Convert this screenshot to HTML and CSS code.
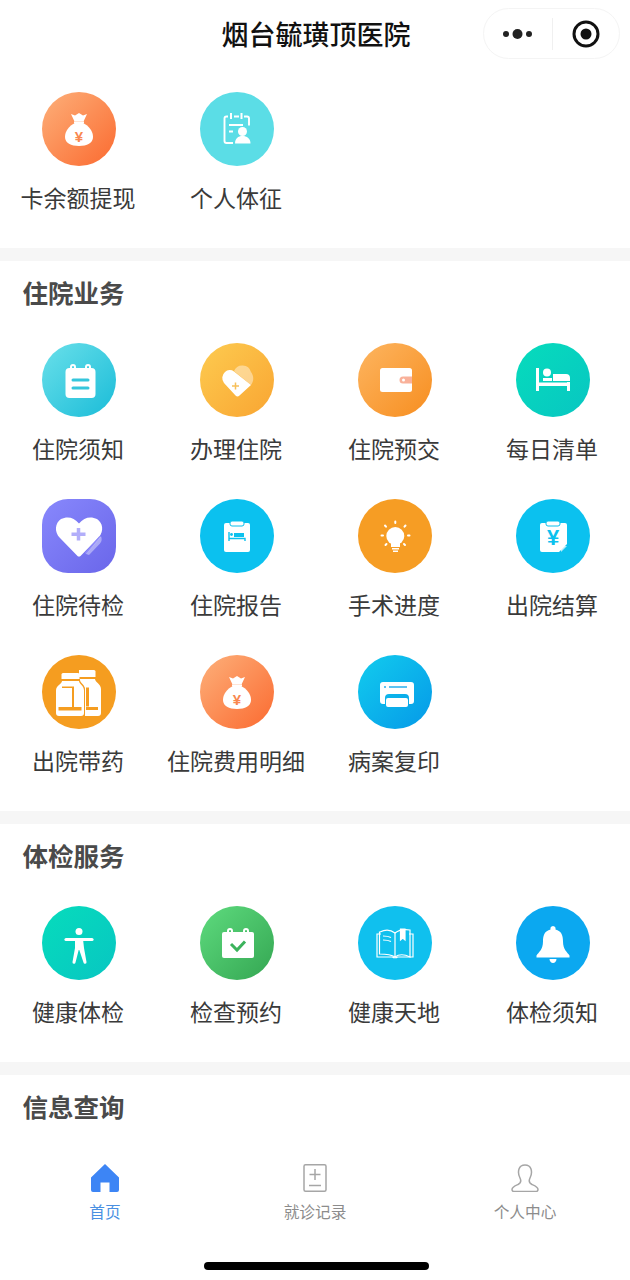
FILE: index.html
```html
<!DOCTYPE html>
<html lang="zh-CN">
<head>
<meta charset="utf-8">
<title>烟台毓璜顶医院</title>
<link rel="stylesheet" href="styles.css">
</head>
<body>
<div class="app">
  <header class="topbar">
    <h1 class="topbar-title">烟台毓璜顶医院</h1>
    <div class="capsule">
      <svg class="capsule-more" viewBox="0 0 32 12"><circle cx="4" cy="6" r="3"/><circle cx="15.500" cy="6" r="5"/><circle cx="27" cy="6" r="3"/></svg>
      <span class="capsule-line"></span>
      <svg class="capsule-close" viewBox="0 0 28 28"><circle cx="14" cy="14" r="12" fill="none" stroke="#111" stroke-width="3"/><circle cx="14" cy="14" r="5.500" fill="#111"/></svg>
    </div>
  </header>

  <main class="content">
    <section class="block">
      <div class="grid">
        <a class="item"><span class="badge g-orange"><svg viewBox="0 0 74 74"><path fill="#fff" d="M29 22l4 1.500 4-2.500 4 2.500 4-1.500-3.500 7.500h-9z"/><rect x="32" y="29.500" width="10" height="2" fill="#fff"/><path fill="#fff" d="M33 31h8c6 3 10 8 10 14 0 6-6 9-14 9s-14-3-14-9c0-6 4-11 10-14z"/><text x="37" y="49.500" class="yen" fill="#f9874f" font-size="15">¥</text></svg></span><span class="label">卡余额提现</span></a>
        <a class="item"><span class="badge c-aqua"><svg viewBox="0 0 74 74"><path fill="none" stroke="#fff" stroke-width="1.900" d="M28 24.500h-1.500a2 2 0 0 0-2 2v22.500a2 2 0 0 0 2 2h6.500M34 24.500h5M44 24.500h3a2 2 0 0 1 2 2v7"/><path stroke="#fff" stroke-width="2" d="M31 21v6M41.500 21v6M29 33h14M29 39.500h4"/><circle cx="42.500" cy="39.500" r="4.500" fill="#fff"/><path fill="#fff" d="M35 51.500c0-5 3-7.500 7.500-7.500s8 2.500 8 7.500z"/></svg></span><span class="label">个人体征</span></a>
      </div>
    </section>

    <section class="block">
      <h2 class="block-title">住院业务</h2>
      <div class="grid">
        <a class="item"><span class="badge g-teal"><svg viewBox="0 0 74 74"><rect x="23.500" y="25" width="30" height="30" rx="4" fill="#fff"/><path fill="none" stroke="#fff" stroke-width="2" d="M29 27v-3a2 2 0 0 1 4 0v3M44 27v-3a2 2 0 0 1 4 0v3"/><path stroke="#35c6dc" stroke-width="3" stroke-linecap="round" d="M31 37h15M31 45h15"/></svg></span><span class="label">住院须知</span></a>
        <a class="item"><span class="badge g-yellow"><svg viewBox="0 0 74 74"><path fill="#fff" fill-opacity=".42" d="M34 28a9 9 0 0 1 17 1c3 4 3 9 0 13z"/><path fill="#fff" d="M25 29a7 7 0 0 1 9-.5L51 42 39.500 52.500a3 3 0 0 1-4 0L24 40a8 8 0 0 1 1-11z"/><path stroke="#f7c05a" stroke-width="1.500" d="M35.500 39.500v7M32 43h7"/></svg></span><span class="label">办理住院</span></a>
        <a class="item"><span class="badge g-amber"><svg viewBox="0 0 74 74"><rect x="22" y="25" width="32" height="24" rx="2.500" fill="#fff"/><path fill="#f9b19a" d="M45 33.500h9v7h-9a3.500 3.500 0 0 1 0-7z"/><circle cx="45.500" cy="37" r="1.500" fill="#fff"/></svg></span><span class="label">住院预交</span></a>
        <a class="item"><span class="badge g-green"><svg viewBox="0 0 74 74"><path fill="#fff" d="M20 25h3v23h-3zM51 39h3v9h-3zM23 39.500h31V43H23z"/><circle cx="31" cy="29.500" r="4" fill="#fff"/><path fill="#fff" d="M37 31h13a4 4 0 0 1 4 4v3H37zM27 35h9v3h-9z"/></svg></span><span class="label">每日清单</span></a>
        <a class="item"><span class="badge s-purple"><svg viewBox="0 0 74 74"><path fill="#fff" d="M37 57.500a2 2 0 0 1-1.500-.5L18 39c-6-6-5-15 1-19 6-3 13-2 18 4.500 5-6.500 12-7.500 18-4.500 6 4 7 12 2 18L38.500 57a2 2 0 0 1-1.500.5z"/><path fill="#8e8afa" d="M57 37.500L59 38 44.500 55l-2-1z"/><path fill="#fff" fill-opacity=".4" d="M59 37c1 3 1 5-1 7.500L47 56l-3-1z"/><path stroke="#b2aefa" stroke-width="3.500" d="M36.500 29v12.500M29.500 35.300h14"/></svg></span><span class="label">住院待检</span></a>
        <a class="item"><span class="badge c-sky"><svg viewBox="0 0 74 74"><rect x="24" y="24" width="26" height="29" rx="2" fill="#fff"/><rect x="30" y="22" width="14" height="5" rx="2" fill="#fff" stroke="#0bc1ee"/><path fill="none" stroke="#0bc1ee" stroke-width="1.400" d="M29 33v9M29 39.500h16v2.500"/><path fill="#0bc1ee" d="M34 34h10v4H34z"/><circle cx="31.500" cy="35.500" r="1.400" fill="#0bc1ee"/></svg></span><span class="label">住院报告</span></a>
        <a class="item"><span class="badge c-orange"><svg viewBox="0 0 74 74"><circle cx="37.300" cy="37" r="9" fill="#fff"/><path fill="#fff" d="M33 44h9v4h-9zM34 49h7v1.500h-7zM35 51.500h5v1.500h-5z"/><path stroke="#fff" stroke-width="2" stroke-linecap="round" d="M37.300 22.500v1.500M27 26.500l1 1.200M47.500 26.500l-1 1.200M23.500 36.500h1.500M50 36.500h1.500M27.500 46l1-1M47 46l-1-1"/></svg></span><span class="label">手术进度</span></a>
        <a class="item"><span class="badge c-sky"><svg viewBox="0 0 74 74"><path fill="#fff" d="M26 24h23a2 2 0 0 1 2 2v19l-8 8H26a2 2 0 0 1-2-2V26a2 2 0 0 1 2-2z"/><path fill="#fff" fill-opacity=".7" d="M45 53v-6h6z"/><rect x="30" y="22" width="14" height="5" rx="2" fill="#fff" stroke="#0bc1ee"/><text x="37" y="46" class="yen" fill="#0bc1ee" font-size="22">¥</text></svg></span><span class="label">出院结算</span></a>
        <a class="item"><span class="badge c-amber"><svg viewBox="0 0 74 74"><path fill="#fff" d="M37 15h15a1.500 1.500 0 0 1 1.500 1.500V22H37z"/><path fill="#fff" d="M38 24h15c0 3 6 5 6 10v24a3 3 0 0 1-3 3H43V35c0-4-4-6-5-8z"/><path fill="#f59d20" d="M44 52h12v3H44zM44 32.500h3v19h-3z"/><path fill="#fff" d="M21 18h15a1.500 1.500 0 0 1 1.500 1.500V24H19.500v-4.500A1.500 1.500 0 0 1 21 18z"/><path fill="#f59d20" d="M19.500 25h18.500c0 3 5 4 5 10v27H12V35c0-6 7.500-7 7.500-10z"/><path fill="#fff" d="M20 26h17c0 3 5 4.500 5 9.500V58a3 3 0 0 1-3 3H17a3 3 0 0 1-3-3V35.500c0-5 6-6.500 6-9.500z"/><path fill="#f59d20" d="M16.500 52h23v3.500h-23zM20 31.500h10v1.500H20zM30 31.500h2V52h-2z"/></svg></span><span class="label">出院带药</span></a>
        <a class="item"><span class="badge g-orange"><svg viewBox="0 0 74 74"><path fill="#fff" d="M29 22l4 1.500 4-2.500 4 2.500 4-1.500-3.500 7.500h-9z"/><rect x="32" y="29.500" width="10" height="2" fill="#fff"/><path fill="#fff" d="M33 31h8c6 3 10 8 10 14 0 6-6 9-14 9s-14-3-14-9c0-6 4-11 10-14z"/><text x="37" y="49.500" class="yen" fill="#f9874f" font-size="15">¥</text></svg></span><span class="label">住院费用明细</span></a>
        <a class="item"><span class="badge g-blue"><svg viewBox="0 0 74 74"><path fill="#fff" d="M25 27h28a3 3 0 0 1 3 3v16a3 3 0 0 1-3 3h-2v-6a4 4 0 0 0-4-4H31a4 4 0 0 0-4 4v6h-2a3 3 0 0 1-3-3V30a3 3 0 0 1 3-3z"/><rect x="28" y="43" width="22" height="9" rx="2" fill="#fff"/><path stroke="#5fc3f2" stroke-width="2" d="M26 32h2M31 32h18"/></svg></span><span class="label">病案复印</span></a>
      </div>
    </section>

    <section class="block">
      <h2 class="block-title">体检服务</h2>
      <div class="grid">
        <a class="item"><span class="badge g-green"><svg viewBox="0 0 74 74"><circle cx="37" cy="25.500" r="3.500" fill="#fff"/><path fill="none" stroke="#fff" stroke-width="3.200" stroke-linecap="round" stroke-linejoin="round" d="M24 33.500h26"/><path fill="#fff" d="M33 33h8l1 9 2.500 14a1.500 1.500 0 0 1-3 .5L37.300 44h-.6l-3.200 12.500a1.500 1.500 0 0 1-3-.5L33 42z"/></svg></span><span class="label">健康体检</span></a>
        <a class="item"><span class="badge g-lime"><svg viewBox="0 0 74 74"><rect x="22" y="26" width="32" height="26" rx="2" fill="#fff"/><path fill="none" stroke="#fff" stroke-width="2" d="M28 28v-3a2 2 0 0 1 4 0v3M44 28v-3a2 2 0 0 1 4 0v3"/><path fill="none" stroke="#3cb35c" stroke-width="3" d="M31 38l6 6 8-8.500"/></svg></span><span class="label">检查预约</span></a>
        <a class="item"><span class="badge c-sky2"><svg viewBox="0 0 74 74" fill="none" stroke="#fff" stroke-width="1.200"><path d="M23 28h-4v23h15.500c1 1 4 1 5 0H55V28h-4"/><path d="M21.500 26v22c6 0 11 0 15.500 3 4-3 9-3 15 0V24c-6-1-11 0-15 3-4-3-9-4-15-1z"/><path d="M37 27v24M25 30c3 0 6 .5 8 1.500M25 34c3 0 6 .5 8 1.500"/><path fill="#fff" d="M42.500 23h4.500v11l-2.250-2-2.250 2z"/></svg></span><span class="label">健康天地</span></a>
        <a class="item"><span class="badge c-blue"><svg viewBox="0 0 74 74"><path fill="#fff" d="M37 20a3 3 0 0 1 2.500 3.500c6 1.500 7.500 6 7.500 12 0 8 4.500 11 6.500 14v2h-33v-2c2-3 6.500-6 6.500-14 0-6 1.500-10.500 7.500-12A3 3 0 0 1 37 20z"/><path fill="#fff" d="M33.500 53h7c0 2-1.500 4-3.500 4s-3.500-2-3.500-4z"/></svg></span><span class="label">体检须知</span></a>
      </div>
    </section>

    <section class="block block-last">
      <h2 class="block-title">信息查询</h2>
    </section>
  </main>

  <nav class="tabbar">
    <a class="tab tab-active">
      <svg class="tab-icon" viewBox="0 0 30 28"><path fill="#3d85f5" d="M15 0l14 13.500V26a2 2 0 0 1-2 2h-7.500v-9.500h-9V28H3a2 2 0 0 1-2-2V13.500z"/></svg>
      <span class="tab-text">首页</span>
    </a>
    <a class="tab">
      <svg class="tab-icon" viewBox="0 0 30 28" fill="none" stroke="#a6a6a6" stroke-width="1.500"><rect x="4" y=".75" width="22" height="26.500" rx="1.500"/><path d="M15 5v11M9.500 10.500h11M9 21.500h12"/></svg>
      <span class="tab-text">就诊记录</span>
    </a>
    <a class="tab">
      <svg class="tab-icon" viewBox="0 0 30 28" fill="none" stroke="#a6a6a6" stroke-width="1.500"><path d="M10 14c1.500 3 1 5-2 6.500-3.500 1.500-6 2.500-6 5 0 1.500 1 2 2 2h22c1 0 2-.5 2-2 0-2.500-2.500-3.500-6-5-3-1.500-3.500-3.500-2-6.500 2-4 2-6 1-9-1-3-3.500-4-6-4s-5 1-6 4c-1 3-1 5 1 9z"/></svg>
      <span class="tab-text">个人中心</span>
    </a>
  </nav>
  <div class="home-bar"></div>
</div>
</body>
</html>
```
FILE: styles.css
```css
* { box-sizing: border-box; }
html, body { margin: 0; padding: 0; background: #fff; overflow: hidden; }
.app {
  width: 630px;
  height: 1280px;
  display: flex;
  flex-direction: column;
  overflow: hidden;
  position: relative;
  font-family: "Noto Sans CJK SC", "Noto Sans", sans-serif;
  color: #333;
}
.topbar {
  height: 72px;
  flex: none;
  display: flex;
  justify-content: center;
  position: relative;
}
.topbar-title {
  margin: 15px 0 0 2px;
  font-size: 27px;
  line-height: 38px;
  font-weight: 500;
  color: #111;
}
.capsule {
  position: absolute;
  left: 483px;
  top: 8px;
  width: 137px;
  height: 51px;
  border: 1px solid #f4f4f4;
  border-radius: 26px;
  display: flex;
  align-items: center;
}
.capsule-more { width: 32px; height: 12px; margin-left: 18px; fill: #222; }
.capsule-line { width: 1px; height: 32px; background: #f0f0f0; margin-left: 18px; }
.capsule-close { width: 28px; height: 28px; margin-left: 19px; }
.content { flex: 1; min-height: 0; overflow: hidden; }
.block { border-bottom: 13px solid #f6f6f6; }
.block:first-child { padding-top: 20px; }
.block-last { border-bottom: 0; }
.block-title {
  margin: 0;
  height: 82px;
  padding: 13px 0 0 22.500px;
  font-size: 25.500px;
  line-height: 36px;
  font-weight: 700;
  color: #4a4a4a;
}
.grid { display: grid; grid-template-columns: repeat(4, 158px); grid-auto-rows: 156px; }
.item { display: flex; flex-direction: column; align-items: center; }
.badge { width: 74px; height: 74px; border-radius: 50%; flex: none; display: block; }
.badge svg { width: 74px; height: 74px; display: block; }
.label {
  margin: 14.500px 2px 0 0;
  font-size: 23px;
  line-height: 32px;
  color: #3a3a3a;
  white-space: nowrap;
}
.yen { font-family: "Liberation Sans", sans-serif; font-weight: 700; text-anchor: middle; }
.g-orange { background: linear-gradient(135deg, #fdb07a, #fb6a30); }
.g-teal { background: linear-gradient(135deg, #6ae0ea, #1abcd8); }
.g-yellow { background: linear-gradient(135deg, #fdcb50, #f9a532); }
.g-amber { background: linear-gradient(135deg, #fdb560, #f78e20); }
.g-green { background: linear-gradient(135deg, #06dcbc, #08c6c2); }
.g-blue { background: linear-gradient(135deg, #12ccee, #0599e8); }
.g-lime { background: linear-gradient(135deg, #5edb7e, #34a652); }
.c-aqua { background: #5bdde6; }
.c-sky { background: #0bc1ef; }
.c-sky2 { background: #10c0ee; }
.c-orange { background: #f69d24; }
.c-amber { background: #f59d20; }
.c-blue { background: #0ba8f0; }
.s-purple { border-radius: 26px; background: linear-gradient(135deg, #8888fc, #6a66ea); }
.tabbar { height: 122px; flex: none; display: grid; grid-template-columns: repeat(3, 1fr); padding-top: 24px; }
.tab { display: flex; flex-direction: column; align-items: center; }
.tab-icon { width: 30px; height: 28px; display: block; }
.tab-text { margin-top: 8px; font-size: 15.700px; line-height: 24px; color: #8c8c8c; }
.tab-active .tab-text { color: #4a90e2; }
.home-bar { width: 225px; height: 8px; border-radius: 4px; background: #000; margin: 0 auto 10px 204px; flex: none; }
```
